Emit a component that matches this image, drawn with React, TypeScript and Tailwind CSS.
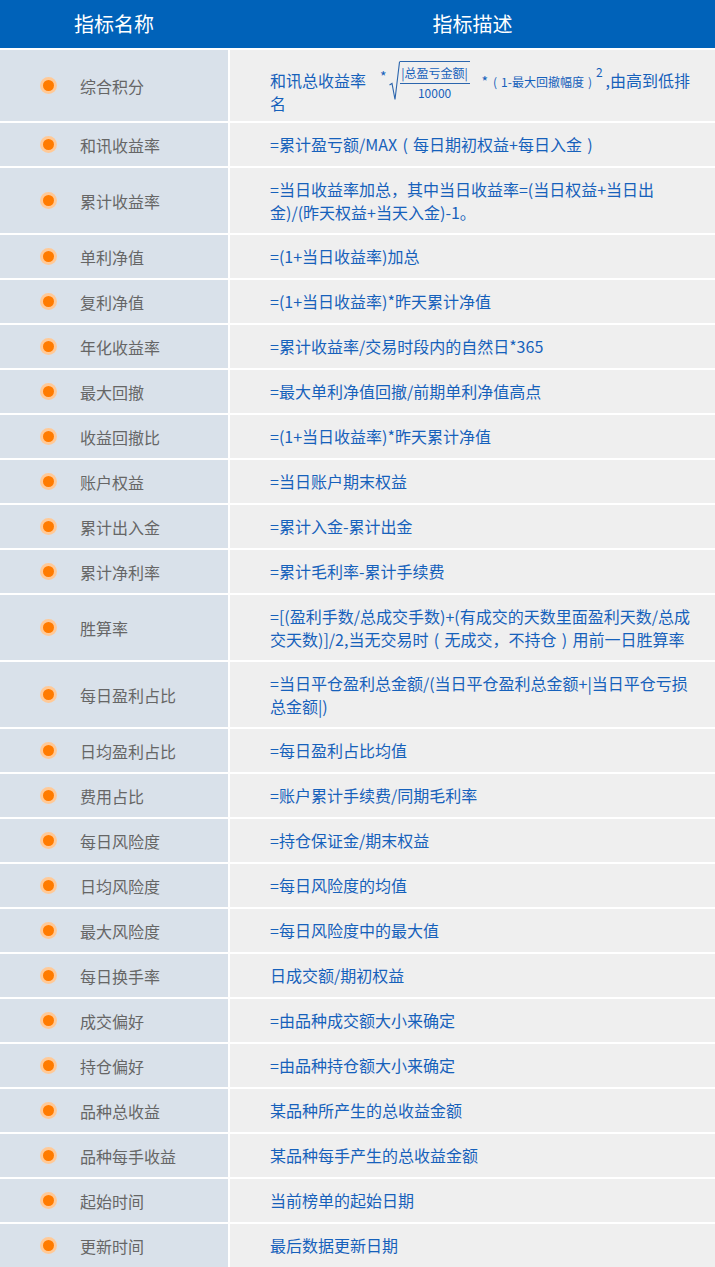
import React from "react";

function fw(s: string): React.ReactNode {
  const parts = s.split(/([（）])/);
  return parts.map((p, i) =>
    p === "（" || p === "）" ? (
      <span key={i} className="inline-block w-[1em] text-center">
        {p === "（" ? "(" : ")"}
      </span>
    ) : (
      <React.Fragment key={i}>{p}</React.Fragment>
    )
  );
}

type Row = { name: string; desc: React.ReactNode; h: number };

const rows: Row[] = [
  { name: "和讯收益率", desc: fw("=累计盈亏额/MAX（每日期初权益+每日入金）"), h: 43 },
  {
    name: "累计收益率",
    desc: (
      <>
        =当日收益率加总，其中当日收益率=(当日权益+当日出
        <br />
        金)/(昨天权益+当天入金)-1。
      </>
    ),
    h: 65,
  },
  { name: "单利净值", desc: "=(1+当日收益率)加总", h: 43 },
  { name: "复利净值", desc: "=(1+当日收益率)*昨天累计净值", h: 43 },
  { name: "年化收益率", desc: "=累计收益率/交易时段内的自然日*365", h: 43 },
  { name: "最大回撤", desc: "=最大单利净值回撤/前期单利净值高点", h: 43 },
  { name: "收益回撤比", desc: "=(1+当日收益率)*昨天累计净值", h: 43 },
  { name: "账户权益", desc: "=当日账户期末权益", h: 43 },
  { name: "累计出入金", desc: "=累计入金-累计出金", h: 43 },
  { name: "累计净利率", desc: "=累计毛利率-累计手续费", h: 43 },
  {
    name: "胜算率",
    desc: (
      <>
        =[(盈利手数/总成交手数)+(有成交的天数里面盈利天数/总成
        <br />
        {fw("交天数)]/2,当无交易时（无成交，不持仓）用前一日胜算率")}
      </>
    ),
    h: 65,
  },
  {
    name: "每日盈利占比",
    desc: (
      <>
        =当日平仓盈利总金额/(当日平仓盈利总金额+|当日平仓亏损
        <br />
        总金额|)
      </>
    ),
    h: 65,
  },
  { name: "日均盈利占比", desc: "=每日盈利占比均值", h: 43 },
  { name: "费用占比", desc: "=账户累计手续费/同期毛利率", h: 43 },
  { name: "每日风险度", desc: "=持仓保证金/期末权益", h: 43 },
  { name: "日均风险度", desc: "=每日风险度的均值", h: 43 },
  { name: "最大风险度", desc: "=每日风险度中的最大值", h: 43 },
  { name: "每日换手率", desc: "日成交额/期初权益", h: 43 },
  { name: "成交偏好", desc: "=由品种成交额大小来确定", h: 43 },
  { name: "持仓偏好", desc: "=由品种持仓额大小来确定", h: 43 },
  { name: "品种总收益", desc: "某品种所产生的总收益金额", h: 43 },
  { name: "品种每手收益", desc: "某品种每手产生的总收益金额", h: 43 },
  { name: "起始时间", desc: "当前榜单的起始日期", h: 43 },
  { name: "更新时间", desc: "最后数据更新日期", h: 43 },
];

function Bullet() {
  return (
    <span className="flex h-[17px] w-[17px] shrink-0 items-center justify-center rounded-full bg-[#ffc997]">
      <span className="h-[11px] w-[11px] rounded-full bg-[#ff7b00]" />
    </span>
  );
}

function NameCell({ name }: { name: string }) {
  return (
    <div className="flex w-[228px] shrink-0 items-center bg-[#d9e1ea] pl-[40px]">
      <Bullet />
      <span className="ml-[23px] text-[16px] text-[#666666]">{name}</span>
    </div>
  );
}

function Formula() {
  return (
    <span className="inline-flex h-[23px] items-center align-top">
      <span className="ml-[14px] -mt-[10px] text-[14px] leading-[14px]">*</span>
      <span className="-my-[9px] ml-[2px] inline-flex h-[40px] items-stretch">
        <svg width="11" height="40" viewBox="0 0 11 40" className="shrink-0">
          <path
            d="M0.5 24 L3 22.5 L6 38.5 L10.5 1 L11 1"
            fill="none"
            stroke="#2b65ad"
            strokeWidth="1.1"
          />
        </svg>
        <span className="flex w-[70px] flex-col items-center border-t border-[#2b65ad] pt-[3px]">
          <span className="w-full border-b border-[#2b65ad] pb-[3px] text-center text-[12px] leading-[15px]">
            |总盈亏金额|
          </span>
          <span className="pt-[1px] text-[12px] leading-[16px]">10000</span>
        </span>
      </span>
      <span className="ml-[12px] text-[14px] leading-[14px]">*</span>
      <span className="ml-[1px] mt-[3px] text-[12px] leading-[14px]">{fw("（1-最大回撤幅度）")}</span>
      <span className="-mt-[17px] text-[12px] leading-[14px]">2</span>
      <span className="ml-[3px]">,由高到低排</span>
    </span>
  );
}

export default function App() {
  return (
    <div
      className="w-[715px] bg-white"
      style={{ fontFamily: '"Noto Sans CJK SC", "Noto Sans", sans-serif' }}
    >
      <div className="flex h-[48px] bg-[#0062b9] text-[20px] text-white">
        <div className="flex w-[228px] shrink-0 items-center justify-center">指标名称</div>
        <div className="ml-[2px] flex flex-1 items-center justify-center">指标描述</div>
      </div>
      <div className="flex flex-col gap-[2px] pt-[2px]">
        <div className="flex h-[71px] gap-[2px]">
          <NameCell name="综合积分" />
          <div className="flex-1 bg-[#efefef] pl-[40px] pr-[8px] pt-[19px] text-[16px] leading-[23px] text-[#1661bb]">
            和讯总收益率
            <Formula />
            <br />名
          </div>
        </div>
        {rows.map((r) => (
          <div key={r.name} className="flex gap-[2px]" style={{ height: r.h }}>
            <NameCell name={r.name} />
            <div className="flex flex-1 items-center bg-[#efefef] pl-[40px] pr-[8px] text-[16px] leading-[23px] text-[#1661bb]">
              <div className="whitespace-nowrap">{r.desc}</div>
            </div>
          </div>
        ))}
      </div>
    </div>
  );
}
